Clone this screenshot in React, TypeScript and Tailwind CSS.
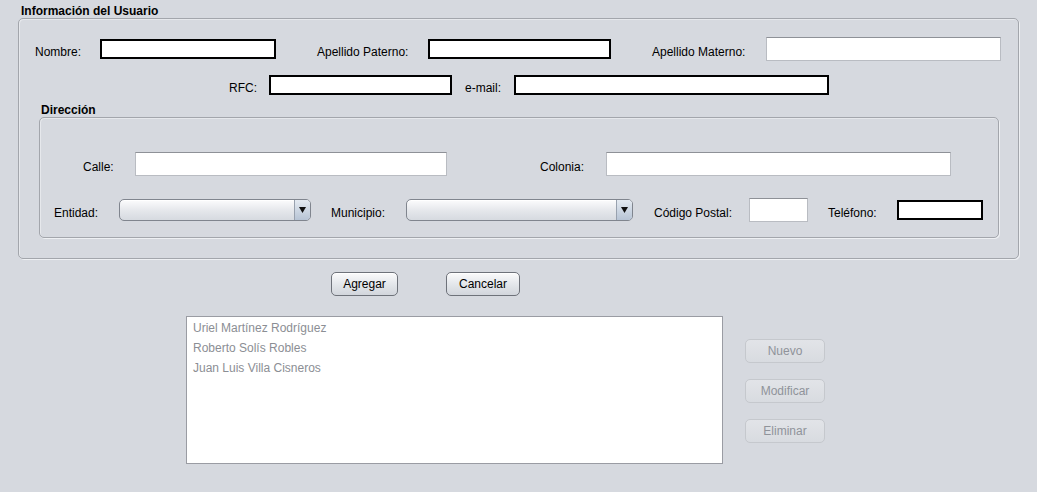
import React from "react";

const font = { fontFamily: '"Liberation Sans", Arial, sans-serif' };

function BlackField({ w }: { w: string }) {
  return <div className={`${w} h-[20px] border-2 border-black bg-white box-border shrink-0`} />;
}

function NimbusField({ w, h }: { w: string; h: string }) {
  return (
    <div
      className={`${w} ${h} bg-white box-border shrink-0 border border-[#b9bcc2] border-t-[#8e9197]`}
    />
  );
}

function Label({ w, text }: { w: string; text: string }) {
  return (
    <div className={`${w} shrink-0 mt-[5px] text-[12px] leading-[14px] text-black whitespace-nowrap`}>{text}</div>
  );
}

function Combo({ w }: { w: string }) {
  return (
    <div
      className={`${w} h-[22px] shrink-0 box-border rounded-[5px] border border-[#80858e] flex overflow-hidden bg-gradient-to-b from-[#fcfcfd] via-[#e6e8ec] to-[#d6dae0] shadow-[inset_0_1px_0_#ffffff]`}
    >
      <div className="flex-1" />
      <div className="w-[16px] h-full border-l border-[#98a1ae] bg-gradient-to-b from-[#e4eaf1] to-[#b7c4d5] flex items-center justify-center">
        <svg width="7" height="6" viewBox="0 0 7 6">
          <polygon points="0,0 7,0 3.5,6" fill="#111" />
        </svg>
      </div>
    </div>
  );
}

function Button({ w, text }: { w: string; text: string }) {
  return (
    <div
      className={`${w} h-[24px] shrink-0 box-border rounded-[5px] border border-[#6e727a] bg-gradient-to-b from-[#fbfbfc] via-[#e4e7eb] to-[#d2d6dc] flex items-center justify-center text-[12px] text-black shadow-[inset_0_1px_0_#ffffff]`}
    >
      {text}
    </div>
  );
}

function DisabledButton({ text }: { text: string }) {
  return (
    <div className="w-[80px] h-[24px] box-border rounded-[5px] border border-[#c5c8cd] bg-gradient-to-b from-[#e2e4e8] to-[#d8dbe0] flex items-center justify-center text-[12px] text-[#8f939a]">
      {text}
    </div>
  );
}

export default function App() {
  return (
    <div className="w-[1037px] h-[492px] bg-[#d6d9df] overflow-hidden" style={font}>
      <div className="pt-[4px] pl-[21px] h-[18px] text-[12px] leading-[14px] font-bold text-black">
        Información del Usuario
      </div>
      <div className="ml-[18px] w-[1001px] h-[241px] box-border rounded-[5px] border border-[#a3a6ac] shadow-[1px_1px_0_#eef0f3,inset_1px_1px_0_#e6e8ec]">
        {/* Row 1 */}
        <div className="mt-[18px] h-[24px] flex items-center">
          <div className="w-[16px] shrink-0" />
          <Label w="w-[65px]" text="Nombre:" />
          <BlackField w="w-[176px]" />
          <div className="w-[41px] shrink-0" />
          <Label w="w-[111px]" text="Apellido Paterno:" />
          <BlackField w="w-[183px]" />
          <div className="w-[41px] shrink-0" />
          <Label w="w-[114px]" text="Apellido Materno:" />
          <NimbusField w="w-[235px]" h="h-[24px]" />
        </div>
        {/* Row 2 */}
        <div className="mt-[14px] h-[20px] flex items-center">
          <div className="w-[210px] shrink-0" />
          <Label w="w-[40px]" text="RFC:" />
          <BlackField w="w-[183px]" />
          <div className="w-[13px] shrink-0" />
          <Label w="w-[49px]" text="e-mail:" />
          <BlackField w="w-[315px]" />
        </div>
        {/* Dirección */}
        <div className="mt-[8px] pl-[22px] h-[14px] text-[12px] leading-[14px] font-bold text-black">Dirección</div>
        <div className="ml-[20px] w-[960px] h-[121px] box-border rounded-[5px] border border-[#a3a6ac] shadow-[1px_1px_0_#eef0f3,inset_1px_1px_0_#e6e8ec]">
          <div className="mt-[34px] h-[24px] flex items-center">
            <div className="w-[43px] shrink-0" />
            <Label w="w-[52px]" text="Calle:" />
            <NimbusField w="w-[312px]" h="h-[24px]" />
            <div className="w-[93px] shrink-0" />
            <Label w="w-[66px]" text="Colonia:" />
            <NimbusField w="w-[345px]" h="h-[24px]" />
          </div>
          <div className="mt-[22px] h-[24px] flex items-center">
            <div className="w-[14px] shrink-0" />
            <Label w="w-[65px]" text="Entidad:" />
            <Combo w="w-[192px]" />
            <div className="w-[20px] shrink-0" />
            <Label w="w-[75px]" text="Municipio:" />
            <Combo w="w-[227px]" />
            <div className="w-[21px] shrink-0" />
            <Label w="w-[95px]" text="Código Postal:" />
            <NimbusField w="w-[59px]" h="h-[24px]" />
            <div className="w-[20px] shrink-0" />
            <Label w="w-[69px]" text="Teléfono:" />
            <BlackField w="w-[86px]" />
          </div>
        </div>
      </div>
      {/* Action buttons */}
      <div className="mt-[13px] flex">
        <div className="w-[331px] shrink-0" />
        <Button w="w-[67px]" text="Agregar" />
        <div className="w-[48px] shrink-0" />
        <Button w="w-[74px]" text="Cancelar" />
      </div>
      {/* List + side buttons */}
      <div className="mt-[20px] flex">
        <div className="w-[186px] shrink-0" />
        <div className="w-[537px] h-[148px] box-border border border-[#9a9ca3] bg-white pt-[1px] pl-[6px] text-[12px] leading-[20px] text-[#8b8e94]">
          <div>Uriel Martínez Rodríguez</div>
          <div>Roberto Solís Robles</div>
          <div>Juan Luis Villa Cisneros</div>
        </div>
        <div className="ml-[22px] mt-[23px] flex flex-col gap-[16px]">
          <DisabledButton text="Nuevo" />
          <DisabledButton text="Modificar" />
          <DisabledButton text="Eliminar" />
        </div>
      </div>
    </div>
  );
}
